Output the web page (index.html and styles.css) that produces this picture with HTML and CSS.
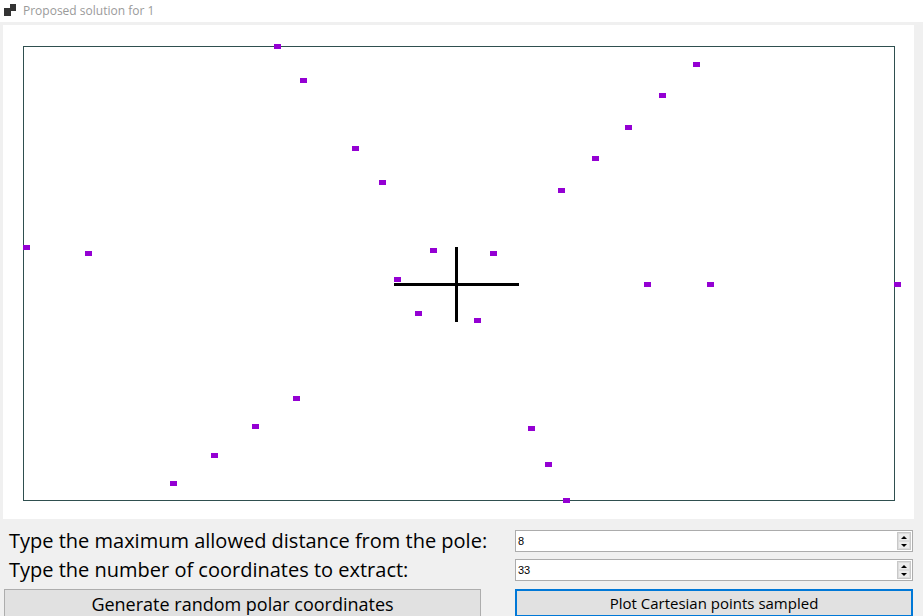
FILE: index.html
```html
<!DOCTYPE html>
<html>
<head>
<meta charset="utf-8">
<title>Proposed solution for 1</title>
<link rel="stylesheet" href="styles.css">
</head>
<body>
<div class="window">
  <div class="titlebar">
    <svg class="app-icon" width="16" height="18" viewBox="0 0 16 18">
      <rect x="4" y="8" width="7" height="8" fill="#333"/>
      <rect x="10" y="4" width="6" height="7" fill="#333"/>
    </svg>
    <span class="title">Proposed solution for 1</span>
  </div>
  <div class="client">
    <div class="panel">
      <div class="plot"></div>
      <div class="cross-h"></div>
      <div class="cross-v"></div>
      <span class="pt" style="left:271px;top:19px"></span>
      <span class="pt" style="left:297px;top:53px"></span>
      <span class="pt" style="left:690px;top:37px"></span>
      <span class="pt" style="left:656px;top:68px"></span>
      <span class="pt" style="left:622px;top:100px"></span>
      <span class="pt" style="left:589px;top:131px"></span>
      <span class="pt" style="left:349px;top:121px"></span>
      <span class="pt" style="left:376px;top:155px"></span>
      <span class="pt" style="left:555px;top:163px"></span>
      <span class="pt" style="left:20px;top:220px"></span>
      <span class="pt" style="left:82px;top:226px"></span>
      <span class="pt" style="left:427px;top:223px"></span>
      <span class="pt" style="left:487px;top:226px"></span>
      <span class="pt" style="left:391px;top:252px"></span>
      <span class="pt" style="left:641px;top:257px"></span>
      <span class="pt" style="left:704px;top:257px"></span>
      <span class="pt" style="left:891px;top:257px"></span>
      <span class="pt" style="left:412px;top:286px"></span>
      <span class="pt" style="left:471px;top:293px"></span>
      <span class="pt" style="left:290px;top:371px"></span>
      <span class="pt" style="left:249px;top:399px"></span>
      <span class="pt" style="left:208px;top:428px"></span>
      <span class="pt" style="left:167px;top:456px"></span>
      <span class="pt" style="left:525px;top:401px"></span>
      <span class="pt" style="left:542px;top:437px"></span>
      <span class="pt" style="left:560px;top:473px"></span>
    </div>
    <div class="controls">
      <label class="lbl">Type the maximum allowed distance from the pole:</label>
      <div class="num">
        <span class="num-val">8</span>
        <div class="spin">
          <span class="spin-btn"><span class="tri-up"></span></span>
          <span class="spin-btn"><span class="tri-down"></span></span>
        </div>
      </div>
      <label class="lbl">Type the number of coordinates to extract:</label>
      <div class="num">
        <span class="num-val">33</span>
        <div class="spin">
          <span class="spin-btn"><span class="tri-up"></span></span>
          <span class="spin-btn"><span class="tri-down"></span></span>
        </div>
      </div>
      <div class="btn-cell"><button class="btn btn-gen">Generate random polar coordinates</button></div>
      <div class="btn-cell2"><button class="btn btn-plot">Plot Cartesian points sampled</button></div>
    </div>
  </div>
</div>
</body>
</html>
```

FILE: styles.css
```css
* { box-sizing: border-box; }
html, body {
  margin: 0;
  padding: 0;
  background: #f0f0f0;
  width: 923px;
  height: 616px;
  overflow: hidden;
  font-family: "Open Sans", "Noto Sans", sans-serif;
}
.window {
  width: 923px;
  height: 616px;
}
.titlebar {
  height: 22px;
  background: #ffffff;
  display: flex;
  align-items: flex-start;
}
.app-icon {
  display: block;
}
.title {
  margin-left: 7px;
  font-size: 12px;
  color: #9a9a9a;
  line-height: 22px;
}
.client {
  padding-top: 3px;
}
.panel {
  position: relative;
  margin-left: 3px;
  width: 911px;
  height: 494px;
  background: #ffffff;
  padding: 21px 0 0 20px;
}
.plot {
  width: 872px;
  height: 455px;
  border: 1px solid #2f4f4f;
}
.cross-h {
  position: absolute;
  left: 391px;
  top: 258px;
  width: 125px;
  height: 3px;
  background: #000;
}
.cross-v {
  position: absolute;
  left: 452px;
  top: 222px;
  width: 3px;
  height: 75px;
  background: #000;
}
.pt {
  position: absolute;
  width: 7px;
  height: 5px;
  background: #9400d3;
}
.controls {
  display: grid;
  grid-template-columns: 515px 398px;
  grid-template-rows: 22px 22px 28px;
  row-gap: 7px;
  padding-top: 11px;
}
.lbl {
  padding-left: 9px;
  font-size: 20px;
  line-height: 22px;
  color: #000;
  white-space: nowrap;
}
.num {
  height: 22px;
  border: 1px solid #acacac;
  background: #fff;
  display: flex;
  align-items: center;
  justify-content: space-between;
  padding: 1px;
}
.num-val {
  font-family: "Liberation Sans", Arial, sans-serif;
  font-size: 11px;
  padding-left: 1px;
  color: #000;
}
.spin {
  display: flex;
  flex-direction: column;
  width: 14px;
  height: 18px;
  border: 1px solid #c8c8c8;
  background: #f0f0f0;
}
.spin-btn {
  flex: 1;
  display: flex;
  align-items: center;
  justify-content: center;
  border: 1px solid #dcdcdc;
  background: #ececec;
}
.tri-up {
  width: 0;
  height: 0;
  border-left: 3px solid transparent;
  border-right: 3px solid transparent;
  border-bottom: 3px solid #000;
}
.tri-down {
  width: 0;
  height: 0;
  border-left: 3px solid transparent;
  border-right: 3px solid transparent;
  border-top: 3px solid #000;
}
.btn-cell {
  padding-left: 4px;
  margin-top: 1px;
}
.btn-cell2 {
  margin-top: 1px;
}
.btn {
  display: block;
  height: 28px;
  margin: 0;
  padding: 0;
  background: #e1e1e1;
  color: #000;
  font-family: "Open Sans", "Noto Sans", sans-serif;
}
.btn-gen {
  width: 477px;
  border: 1px solid #adadad;
  font-size: 18px;
  line-height: 26px;
  padding: 0;
  display: flex;
  align-items: flex-start;
  justify-content: center;
  padding-top: 1px;
}
.btn-plot {
  width: 398px;
  border: 2px solid #0078d7;
  font-size: 15px;
  line-height: 22px;
  display: flex;
  align-items: flex-start;
  justify-content: center;
  padding-top: 1px;
}
```
